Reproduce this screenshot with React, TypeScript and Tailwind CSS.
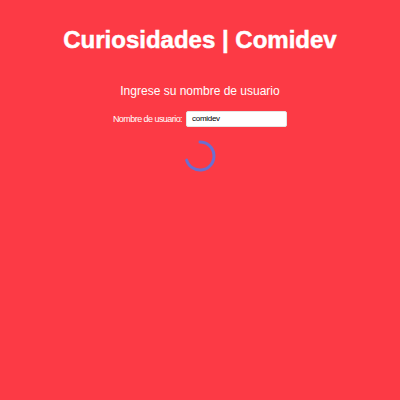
export default function App() {
  return (
    <div className="w-[400px] h-[400px] bg-[#fc3a45] flex flex-col items-center" style={{ fontFamily: '"Liberation Sans", Arial, sans-serif' }}>
      <h1 className="mt-[26px] text-[24px] leading-[28px] font-bold text-white [-webkit-text-stroke:0.5px_white]">Curiosidades | Comidev</h1>
      <h2 className="mt-[29.5px] text-[12px] leading-[14px] text-white">Ingrese su nombre de usuario</h2>
      <div className="mt-[13.5px] flex items-center gap-[4px]">
        <label className="text-[9px] leading-[11px] tracking-[-0.55px] text-white">Nombre de usuario:</label>
        <div className="w-[101px] h-[16px] bg-white rounded-[2px] border border-[#e5e5e5] flex items-center px-[5px] text-[8px] tracking-[-0.3px] text-black">comidev</div>
      </div>
      <svg className="mt-[9.5px]" width="38" height="38" viewBox="0 0 38 38">
        <path d="M19 5 A14 14 0 1 1 5.61 23.09" fill="none" stroke="#6b6fd0" strokeWidth="3" strokeLinecap="round" />
      </svg>
    </div>
  );
}
